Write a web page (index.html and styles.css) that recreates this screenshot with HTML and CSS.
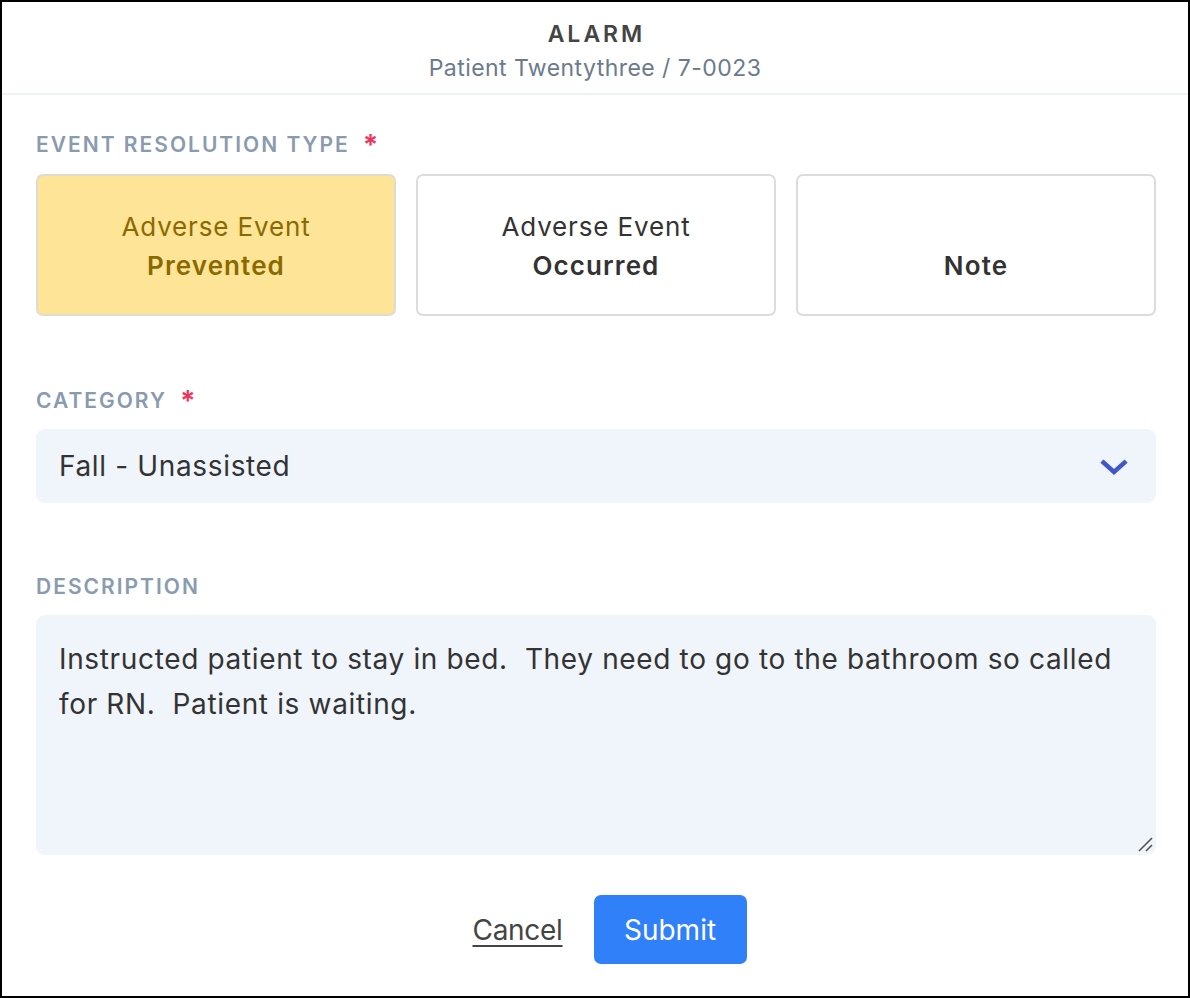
FILE: index.html
```html
<!DOCTYPE html>
<html>
<head>
<meta charset="utf-8">
<link rel="stylesheet" href="styles.css">
</head>
<body>
<div class="dialog">
  <header class="head">
    <div class="title">ALARM</div>
    <div class="subtitle">Patient Twentythree / 7-0023</div>
  </header>
  <main class="body">
    <div class="label">EVENT RESOLUTION TYPE <span class="req">*</span></div>
    <div class="cards">
      <div class="card selected"><span>Adverse Event</span><strong>Prevented</strong></div>
      <div class="card"><span>Adverse Event</span><strong>Occurred</strong></div>
      <div class="card"><span>&nbsp;</span><strong>Note</strong></div>
    </div>
    <div class="label second">CATEGORY <span class="req">*</span></div>
    <div class="select">
      <span>Fall - Unassisted</span>
      <svg class="chev" width="28" height="16" viewBox="0 0 28 16"><path d="M3.5 3.5 L14 13 L24.5 3.5" fill="none" stroke="#3f58c6" stroke-width="4.4" stroke-linecap="square"/></svg>
    </div>
    <div class="label third">DESCRIPTION</div>
    <div class="textarea">Instructed patient to stay in bed.&nbsp; They need to go to the bathroom so called for RN.&nbsp; Patient is waiting.
      <svg class="grip" width="16" height="16" viewBox="0 0 16 16"><path d="M2 15 L15 2 M9 15 L15 9" stroke="#555" stroke-width="1.6"/></svg>
    </div>
    <div class="actions">
      <a class="cancel">Cancel</a>
      <button class="submit">Submit</button>
    </div>
  </main>
</div>
</body>
</html>
```
FILE: styles.css
```css
html, body { margin: 0; padding: 0; background: #fff; }
body { font-family: Inter, "Noto Sans", sans-serif; color: #333; }
.dialog {
  width: 1190px; height: 998px; box-sizing: border-box;
  border: 2px solid #000;
  display: flex; flex-direction: column;
}
.head {
  border-bottom: 2px solid #eef2f7;
  text-align: center;
  padding: 18px 0 8px;
}
.title { font-size: 23px; font-weight: 600; letter-spacing: 3px; padding-left: 3px; color: #444; line-height: 28px; }
.subtitle { font-size: 23px; letter-spacing: 0.45px; color: #6b7a8c; line-height: 34px; margin-top: 3px; }
.body { padding: 38px 32px 0 34px; display: flex; flex-direction: column; }
.label { font-size: 21px; font-weight: 600; letter-spacing: 2px; color: #8a9bb0; line-height: 24px; }
.req { color: #f0335c; font-size: 28px; margin-left: 6px; vertical-align: -3px; }
.cards { display: grid; grid-template-columns: repeat(3, 1fr); gap: 20px; margin-top: 17px; }
.card {
  height: 142px; box-sizing: border-box;
  border: 2px solid #dcdcdc; border-radius: 7px;
  display: flex; flex-direction: column; align-items: center; justify-content: center;
  font-size: 26px; line-height: 39px; color: #333; letter-spacing: 0.85px;
  padding-top: 2px;
}
.card strong { font-weight: 600; letter-spacing: 1.1px; }
.card.selected { background: #fee497; color: #8a6a00; border-color: #dedbd0; }
.second { margin-top: 73px; }
.select {
  margin-top: 16px; height: 74px; background: #f0f4fb; border-radius: 9px;
  display: flex; align-items: center; justify-content: space-between;
  padding: 0 28px 0 23px; font-size: 28px; letter-spacing: 0.65px; color: #333;
}
.chev { margin-top: 2px; }
.third { margin-top: 72px; }
.textarea {
  position: relative;
  margin-top: 16px; height: 240px; box-sizing: border-box; background: #f0f4fb; border-radius: 9px;
  padding: 22px 23px; font-size: 28px; letter-spacing: 0.65px; line-height: 45px; color: #333;
}
.grip { position: absolute; right: 3px; bottom: 3px; }
.actions { display: flex; justify-content: center; align-items: center; margin-top: 40px; padding-right: 4px; }
.cancel { font-size: 28px; letter-spacing: -0.3px; padding: 0 31px; color: #444; text-decoration: underline; text-decoration-thickness: 2px; text-underline-offset: 5px; }
.submit {
  font-family: inherit; font-size: 28px; color: #fff; background: #2f80f9; border: none;
  border-radius: 7px; width: 153px; height: 69px; padding: 0;
}
```
